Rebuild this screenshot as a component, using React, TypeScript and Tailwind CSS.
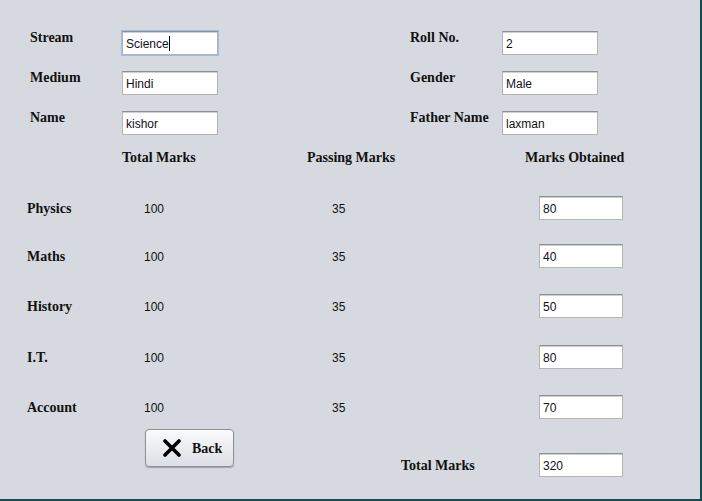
import React from "react";

const serif = { fontFamily: '"Liberation Serif", "Times New Roman", serif' };
const sans = { fontFamily: '"Liberation Sans", Arial, sans-serif' };

function Field({ value, w = "w-[96px]", focused = false }: { value: string; w?: string; focused?: boolean }) {
  return (
    <div
      className={`${w} h-[24px] shrink-0 bg-white border border-[#b4b4b4] border-t-[#8e8e8e] shadow-[inset_0_1px_0_#d0d0d0] pl-[3px] pt-[2px] leading-[21px] text-[12px] text-[#101020] ${focused ? "outline outline-1 outline-[#9fbbdf] border-[#7f9fcb]" : ""}`}
      style={sans}
    >
      {value}
      {focused && <span className="inline-block w-px h-[15px] bg-black align-[-3px]" />}
    </div>
  );
}

function Label({ children, w }: { children: React.ReactNode; w: string }) {
  return (
    <div className={`${w} shrink-0 -mt-[1px] text-[14px] leading-[16px] font-bold text-[#111] whitespace-nowrap`} style={serif}>
      {children}
    </div>
  );
}

const subjects = [
  { name: "Physics", obt: "80", mt: "mt-[30px]" },
  { name: "Maths", obt: "40", mt: "mt-[24px]" },
  { name: "History", obt: "50", mt: "mt-[26px]" },
  { name: "I.T.", obt: "80", mt: "mt-[27px]" },
  { name: "Account", obt: "70", mt: "mt-[26px]" },
];

export default function App() {
  return (
    <div className="w-[702px] h-[501px] bg-[#0e4e54]">
      <div className="w-[700px] h-[499px] bg-[#d6d9df] pt-[31px]">
        {/* top info */}
        <div className="flex">
          <div className="ml-[30px] flex flex-col gap-[16px]">
            <div className="flex items-start">
              <Label w="w-[92px]">Stream</Label>
              <Field value="Science" focused />
            </div>
            <div className="flex items-start">
              <Label w="w-[92px]">Medium</Label>
              <Field value="Hindi" />
            </div>
            <div className="flex items-start">
              <Label w="w-[92px]">Name</Label>
              <Field value="kishor" />
            </div>
          </div>
          <div className="ml-[192px] flex flex-col gap-[16px]">
            <div className="flex items-start">
              <Label w="w-[92px]">Roll No.</Label>
              <Field value="2" />
            </div>
            <div className="flex items-start">
              <Label w="w-[92px]">Gender</Label>
              <Field value="Male" />
            </div>
            <div className="flex items-start">
              <Label w="w-[92px]">Father Name</Label>
              <Field value="laxman" />
            </div>
          </div>
        </div>

        {/* headers */}
        <div className="mt-[15px] flex ml-[122px] text-[14px] leading-[16px] font-bold text-[#111]" style={serif}>
          <div className="w-[185px]">Total Marks</div>
          <div className="w-[218px]">Passing Marks</div>
          <div>Marks Obtained</div>
        </div>

        {/* subject rows */}
        {subjects.map((s) => (
          <div key={s.name} className={`${s.mt} flex items-center h-[24px]`}>
            <div className="ml-[27px] mt-[2px] w-[117px] text-[14px] leading-[16px] font-bold text-[#111]" style={serif}>
              {s.name}
            </div>
            <div className="w-[188px] mt-[2px] text-[12px] text-[#111]" style={sans}>100</div>
            <div className="w-[207px] mt-[2px] text-[12px] text-[#111]" style={sans}>35</div>
            <Field value={s.obt} w="w-[84px]" />
          </div>
        ))}

        {/* bottom */}
        <div className="mt-[10px] flex h-[48px]">
          <button
            className="ml-[145px] self-start w-[89px] h-[38px] rounded-[4px] border border-[#8e9096] bg-gradient-to-b from-[#fbfbfc] to-[#dcdfe5] shadow-[0_1px_1px_rgba(0,0,0,0.25)] flex items-center pl-[16px]"
          >
            <svg width="20" height="18" viewBox="0 0 20 18" className="shrink-0">
              <path d="M3 2 L17 16 M17 2 L3 16" stroke="#000" strokeWidth="3.6" strokeLinecap="round" />
            </svg>
            <span className="ml-[10px] text-[14px] font-bold text-[#111]" style={serif}>Back</span>
          </button>
          <div className="ml-[167px] self-end flex items-center h-[24px]">
            <div className="w-[138px] mt-[2px] text-[14px] leading-[16px] font-bold text-[#111]" style={serif}>Total Marks</div>
            <Field value="320" w="w-[84px]" />
          </div>
        </div>
      </div>
    </div>
  );
}
